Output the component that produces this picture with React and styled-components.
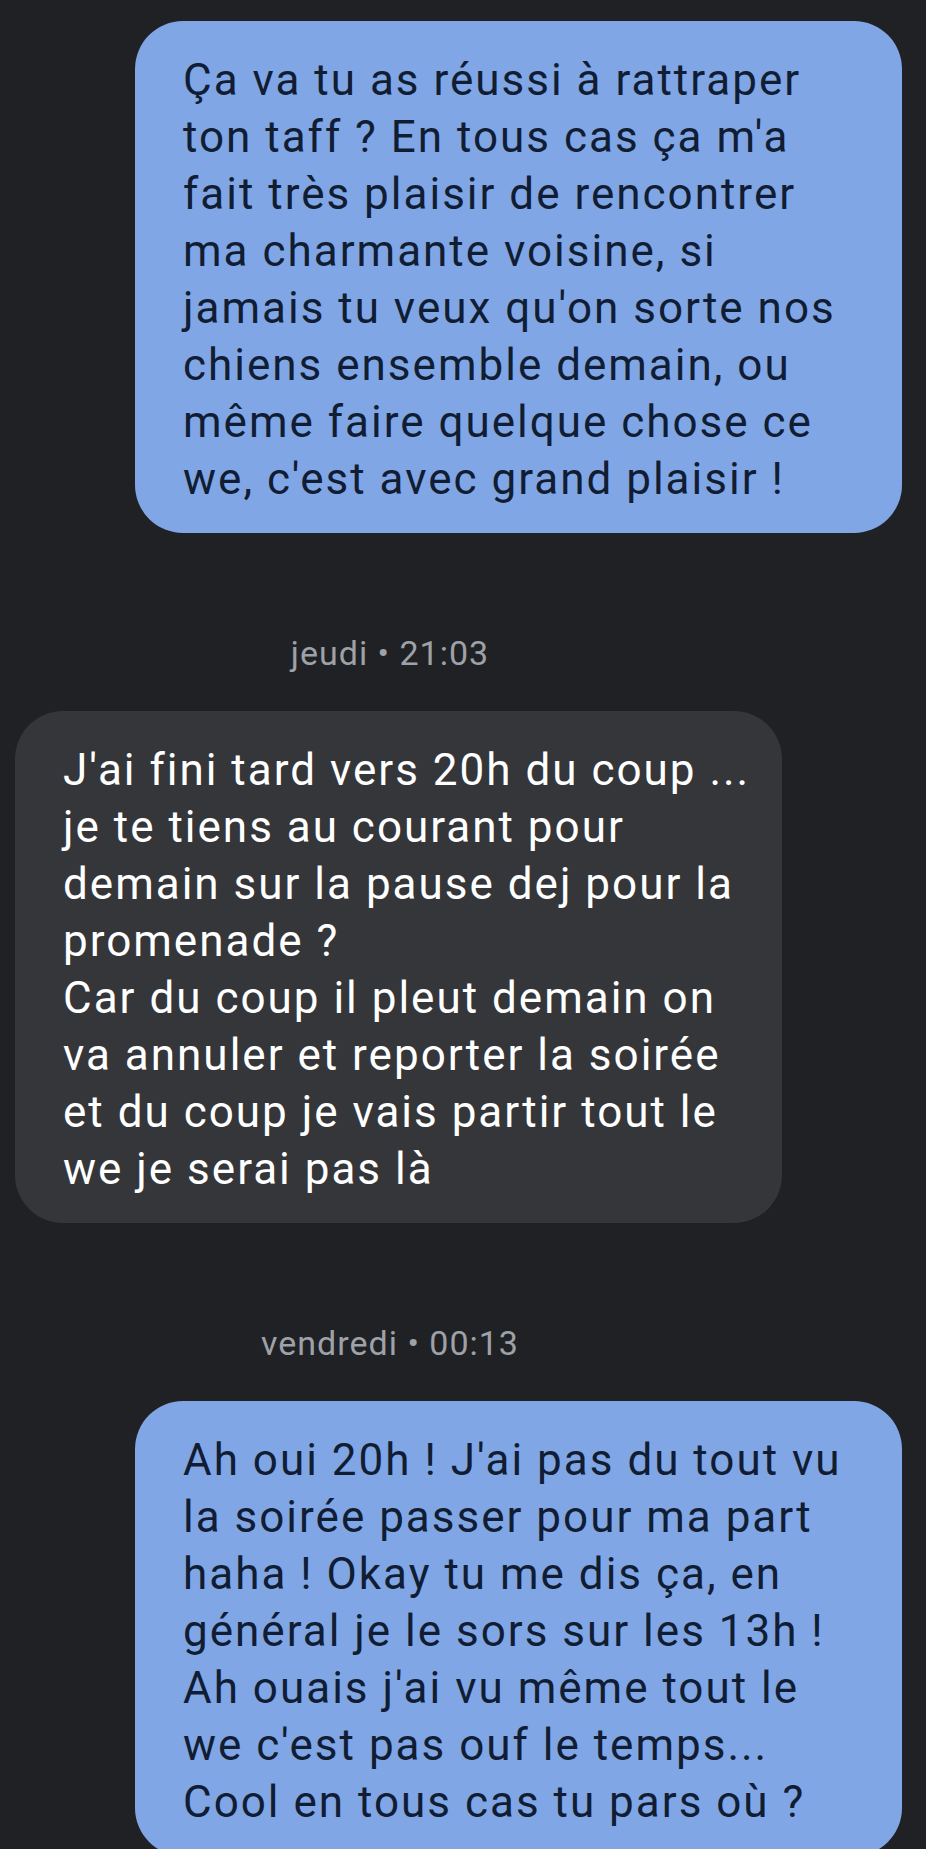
import React from 'react'
import styled, { createGlobalStyle } from 'styled-components'

const Global = createGlobalStyle`
  html, body {
    margin: 0;
    padding: 0;
    background: #202124;
  }
  body {
    font-family: Roboto, "Noto Sans", sans-serif;
  }
`

// conversation data, one entry per line so the wrapping stays the same
const thread = [
  {
    type: 'msg',
    out: true,
    lines: [
      'Ça va tu as réussi à rattraper',
      "ton taff ? En tous cas ça m'a",
      'fait très plaisir de rencontrer',
      'ma charmante voisine, si',
      "jamais tu veux qu'on sorte nos",
      'chiens ensemble demain, ou',
      'même faire quelque chose ce',
      "we, c'est avec grand plaisir !",
    ],
  },
  { type: 'time', label: 'jeudi • 21:03' },
  {
    type: 'msg',
    out: false,
    lines: [
      "J'ai fini tard vers 20h du coup ...",
      'je te tiens au courant pour',
      'demain sur la pause dej pour la',
      'promenade ?',
      'Car du coup il pleut demain on',
      'va annuler et reporter la soirée',
      'et du coup je vais partir tout le',
      'we je serai pas là',
    ],
  },
  { type: 'time', label: 'vendredi • 00:13' },
  {
    type: 'msg',
    out: true,
    lines: [
      "Ah oui 20h ! J'ai pas du tout vu",
      'la soirée passer pour ma part',
      'haha ! Okay tu me dis ça, en',
      'général je le sors sur les 13h !',
      "Ah ouais j'ai vu même tout le",
      "we c'est pas ouf le temps...",
      'Cool en tous cas tu pars où ?',
    ],
  },
]

const App = () => {
  return (
    <>
      <Global />
      <Thread>
        {thread.map((item, i) => {
          if (item.type === 'time') {
            return <Stamp key={i}>{item.label}</Stamp>
          }
          return (
            <Bubble key={i} $out={item.out}>
              {item.lines.map((l, j) => (
                <Line key={j}>{l}</Line>
              ))}
            </Bubble>
          )
        })}
      </Thread>
    </>
  )
}

export default App

const Thread = styled.div`
  display: flex;
  flex-direction: column;
  padding: 21px 24px 0 15px;
  min-height: 1849px;
  box-sizing: border-box;
  overflow: hidden;
`

const Bubble = styled.div`
  width: 767px;
  box-sizing: border-box;
  padding: 31px 30px 25px 48px;
  border-radius: 48px;
  align-self: ${(p) => (p.$out ? 'flex-end' : 'flex-start')};
  background: ${(p) => (p.$out ? '#80a6e6' : '#35363a')};
  color: ${(p) => (p.$out ? '#111d33' : '#ffffff')};
  font-size: 44px;
  line-height: 57px;
  letter-spacing: 2px;
  flex-shrink: 0;
`

const Line = styled.div`
  white-space: nowrap;
`

const Stamp = styled.div`
  margin: 100px 0 38px;
  padding-right: 137px;
  text-align: center;
  font-size: 34px;
  line-height: 40px;
  letter-spacing: 1px;
  color: #9ea1a7;
`
